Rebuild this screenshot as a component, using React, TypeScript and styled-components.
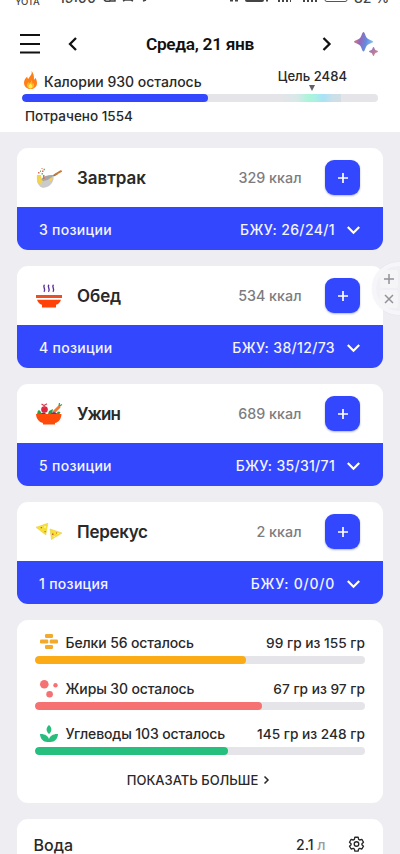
import React from 'react';
import styled, { createGlobalStyle } from 'styled-components';

const GlobalStyle = createGlobalStyle`
  * { box-sizing: border-box; }
  html, body { margin: 0; background: #eeedf2; }
  body { font-family: Inter, "Noto Sans", sans-serif; font-weight: 500; color: #292929; }
  button { font: inherit; color: inherit; border: 0; padding: 0; background: none; }
`;

const Screen = styled.div`
  position: relative;
  height: 854px;
  overflow: hidden;
  background: #eeedf2;
`;

const Icon = styled.svg<{ $w: number; $h: number }>`
  display: block;
  flex: none;
  width: ${(p) => p.$w}px;
  height: ${(p) => p.$h}px;
  overflow: visible;
`;

const Text = styled.span<{ $size?: number; $track?: number }>`
  font-size: ${(p) => p.$size ?? 14}px;
  letter-spacing: ${(p) => p.$track ?? 0}px;
  line-height: 18px;
  white-space: nowrap;
`;

const Header = styled.header`
  height: 132px;
  background: #fff;
`;

const StatusBar = styled.div`
  height: 23px;
  padding: 0 16px 0 15px;
  display: flex;
  justify-content: space-between;
  overflow: hidden;
  color: #444;
`;

const StatusGroup = styled.div`
  display: flex;
  align-items: flex-start;
`;

const Carrier = styled.span`
  width: 44px;
  margin-top: -5px;
  font-size: 9.5px;
  line-height: 13px;
  letter-spacing: -0.2px;
`;

const StatusText = styled.span<{ $width: number }>`
  width: ${(p) => p.$width}px;
  margin-top: -11.500px;
  font-size: 14px;
  line-height: 18px;
  white-space: nowrap;
`;

const NavBar = styled.nav`
  height: 42px;
  padding: 0 22px 0 20px;
  display: grid;
  grid-template-columns: 48px 11px 1fr 11px 22px 24px;
  align-items: center;
`;

const DateTitle = styled.h1`
  margin: 0;
  padding-left: 0;
  text-align: center;
  font: 600 17.3px/24px Roboto, sans-serif;
  letter-spacing: -0.3px;
  color: #111;
`;

const Budget = styled.section`
  padding: 0 22px;
`;

const BudgetTop = styled.div`
  height: 28.5px;
  display: flex;
  justify-content: space-between;
`;

const Remaining = styled.div`
  display: flex;
  align-items: flex-start;
  gap: 7px;
  padding: 6px 0 0 2px;

  span { margin-top: 2px; }
`;

const Goal = styled.div`
  display: flex;
  flex-direction: column;
  align-items: center;
  padding: 2px 31px 0 0;
`;

const Track = styled.div<{ $gradient?: boolean }>`
  height: 8px;
  border-radius: 4px;
  overflow: hidden;
  background: ${(p) =>
    p.$gradient
      ? 'linear-gradient(90deg, #e4e4e9 260px, #d8e8e8 275px, #a9f5da 287px, #aaf0e4 293px, #a8e2f7 301px, #cbdfe9 311px, #d2dee6 319px) 0 0 / 319px 100% no-repeat, #e4e4e9'
      : '#e4e4e9'};
`;

const Fill = styled.div<{ $color: string; $percent: number }>`
  width: ${(p) => p.$percent}%;
  height: 100%;
  border-radius: 4px;
  background: ${(p) => p.$color};
`;

const Spent = styled.div`
  display: flex;
  padding: 5px 3px 0;
`;

const Content = styled.main`
  display: flex;
  flex-direction: column;
  gap: 16px;
  padding: 16.400px 17.500px 0 17px;
`;

const Card = styled.section`
  flex: none;
  height: 102px;
  border-radius: 11px;
  overflow: hidden;
  background: #fff;
`;

const MealTop = styled.div`
  height: 58.5px;
  padding: 0 22.500px 0 18.500px;
  display: grid;
  grid-template-columns: 41.5px 1fr auto 58.5px;
  align-items: center;
`;

const MealName = styled.h2<{ $track: number }>`
  margin: 0;
  font-size: 17px;
  font-weight: 600;
  line-height: 22px;
  letter-spacing: ${(p) => p.$track}px;
`;

const Kcal = styled(Text)`
  color: #7c7c7f;
`;

const AddButton = styled.button`
  width: 35px;
  height: 35px;
  margin-left: auto;
  border-radius: 9px;
  display: grid;
  place-items: center;
  background: #3347ff;
  box-shadow: 0 1px 2px rgba(30, 40, 100, 0.35);
`;

const MealBottom = styled.div`
  height: 43.5px;
  padding: 3px 22.500px 0 22px;
  display: flex;
  align-items: center;
  color: #f4f5ff;
  background: #3347ff;
`;

const Macros = styled(Text)`
  margin: 0 12px 0 auto;
`;

const MacroCard = styled(Card)`
  height: 183px;
  padding: 14px 17.500px 0 18px;
`;

const MacroRow = styled.div`
  height: 45.5px;
`;

const MacroHead = styled.div`
  height: 22px;
  padding-left: 5px;
  display: grid;
  grid-template-columns: 25.5px 1fr auto;
  align-items: start;
`;

const ShowMore = styled.button`
  margin: 0 auto;
  display: flex;
  align-items: center;
  gap: 6px;
  transform: translateX(-2px);
`;

const WaterCard = styled(Card)`
  padding: 17px 18px 0 16.5px;
  display: grid;
  grid-template-columns: 1fr auto 23px 16px;
  align-items: start;
`;

const Unit = styled.span`
  color: #9b9ba0;
`;

const Bubble = styled.aside`
  position: absolute;
  left: 371.5px;
  top: 262px;
  width: 53px;
  height: 53px;
  border-radius: 50%;
  border: 4px solid rgba(248, 248, 251, 0.8);
  background: rgba(240, 240, 245, 0.85);
  box-shadow: 0 0 1px rgba(0, 0, 0, 0.12);
  display: flex;
  flex-direction: column;
  justify-content: center;
  gap: 2px;
  padding-left: 4.5px;
`;

const BubbleKey = styled.span`
  width: 18px;
  height: 18px;
  border-radius: 3px;
  display: grid;
  place-items: center;
  background: rgba(247, 247, 250, 0.7);
`;

function Chevron({ dir }: { dir: 'left' | 'right' }) {
  return (
    <Icon $w={11} $h={14} viewBox="0 0 11 14" fill="none" stroke="#111" strokeWidth="2.3">
      <path d={dir === 'left' ? 'M8 1 2 7l6 6' : 'M2.500 1l6 6-6 6'} />
    </Icon>
  );
}

function Sparkles() {
  return (
    <Icon $w={24} $h={24} viewBox="0 0 24 24">
      <defs>
        <linearGradient id="sparkle" x1="0" y1="0" x2="1" y2="0.25">
          <stop offset="0" stopColor="#f28165" />
          <stop offset="0.4" stopColor="#9269bd" />
          <stop offset="0.7" stopColor="#6689da" />
          <stop offset="1" stopColor="#7bbcf0" />
        </linearGradient>
        <linearGradient id="sparkle-small" x1="0" y1="0" x2="1" y2="1">
          <stop offset="0" stopColor="#7c73cc" />
          <stop offset="1" stopColor="#ef8179" />
        </linearGradient>
      </defs>
      <path fill="url(#sparkle)" d="M9.500 0C10.800 0 11.300 4 13 6C15 8 19 8.600 19 9.800S15 11.600 13 13.500C11.300 15.500 10.800 19.500 9.500 19.500S7.700 15.500 6 13.500C4 11.600 0 11 0 9.800S4 8 6 6C7.700 4 8.200 0 9.500 0z" />
      <path fill="url(#sparkle-small)" d="M19.500 15c.7 0 1 2 1.700 2.700s2.800 1 2.800 1.800-2.100 1.100-2.800 1.800-1 2.700-1.700 2.700-1-2-1.700-2.700-2.800-1-2.800-1.800 2.100-1.100 2.800-1.800 1-2.700 1.700-2.700z" />
    </Icon>
  );
}

function Flame() {
  return (
    <Icon $w={13} $h={18} viewBox="0 0 13 18">
      <path fill="#ff7f17" d="M7.500 0c.8 2.600-.4 4.100-2 5.900-.6.700-.9 1.300-1.200 2C3.500 7.300 3.200 6.500 3.300 5.400 1.500 7 0 9 0 11.700 0 15.300 2.700 18 6.500 18s6.500-2.600 6.500-6.100c0-2-.8-3.700-1.700-5.100-.2 1-.7 1.600-1.400 2C10.300 5.500 9.600 2 7.500 0z" />
      <path fill="#ffb326" d="M7.100 9c.3 1.500-.5 2.300-1.500 3.200-.5-.4-.7-.7-.8-1.300-1.300 1.200-2 2.100-2 3.600 0 2 1.500 3 3.700 3s3.700-1.200 3.700-3c0-1.200-.4-2-1-2.700-.2.500-.5.900-1 1.100C8.500 11.500 8.300 10 7.100 9z" />
      <path fill="#fff04d" d="M6.500 12.500c-.9 1-1.900 1.700-1.900 3 0 1.200.8 1.900 1.900 1.900s1.900-.7 1.900-1.900c0-1.300-1-2-1.900-3z" />
    </Icon>
  );
}

function Wok() {
  return (
    <Icon $w={26} $h={22} viewBox="0 0 26 22">
      <path fill="#cacaca" d="M1 14C4 12 14 11 17.500 8.500c1 6-3.500 11.800-9.500 12.300-3.500.2-6-2.800-7-6.800z" />
      <path fill="#a6a6a7" d="M5 12C8 9 14 7.500 17.500 8.300c-1.500 3-7 5.500-11.500 6z" />
      <path d="m17.300 8.700 4-2" stroke="#777" strokeWidth="1.600" />
      <path d="m19.200 7.500 5.800-3.300" stroke="#c97a32" strokeWidth="2" strokeLinecap="round" />
      <path d="M2 8v4.500c0 2 1 3.500 4 4M4 8l.5 7 2-1.500M13.500 13.500l2.500-2.500" stroke="#f1d34e" strokeWidth="2.200" fill="none" />
      <path fill="#e56a54" d="M2 5h1.500v1.500H2zM6 3.500h1.500V5H6zM7 8h1.500v4H7zM5.500 1h1v1h-1z" />
      <path fill="#62b96b" d="M4 3.500h1V5H4zM7.500 1.800H9v1.500H7.500zM5.500 6H7v1.400H5.500z" />
    </Icon>
  );
}

function SoupBowl() {
  return (
    <Icon $w={26} $h={24} viewBox="0 0 26 24">
      <path d="M8.500.8C6 3 10.500 5 8 7.900M13 .8C10.500 3 15 5 12.500 7.900M17.500.8C15 3 19.500 5 17 7.900" fill="none" stroke="#583096" strokeWidth="1.400" />
      <path fill="#e85127" d="M0 11h26v3H0z" />
      <path fill="#ff4208" d="M1 15.800h24c-1 3-3 4.500-5 5v2.700H6v-2.700c-2-.5-4-2-5-5z" />
    </Icon>
  );
}

function SaladBowl() {
  return (
    <Icon $w={26} $h={22} viewBox="0 0 26 22">
      <path d="m18 9 5-5" stroke="#f07938" strokeWidth="3" strokeLinecap="round" />
      <path d="M23 3l.5-3M23.500 3l2.500-1.500" stroke="#35a852" strokeWidth="1.300" />
      <circle cx="8.500" cy="6.500" r="3.300" fill="#dc2642" />
      <path d="M5.500 1 8 2.500 11 .7M8.400 2v3" fill="none" stroke="#db4150" strokeWidth="1.200" />
      <path fill="#2b9c48" d="M1 11c1-2 0-3 2-4 2 1 2 3 3 4zM12 11l1-3 4-2-1 5zM20 11l2-2.500 2.500.5-1 2z" />
      <path fill="#61338e" d="M5 11c1-2 4-2 5 0zM15 11c1-2.500 5-2.500 6 0z" />
      <path fill="#ff4b0a" d="M0 11h25.500c-.3 5-3 8.500-6.500 9v1.500H7V20c-4-1-6.700-4-7-9z" />
      <path d="M1 12.500h23.500" stroke="#d75a2a" />
    </Icon>
  );
}

function Chips() {
  return (
    <Icon $w={26} $h={17} viewBox="0 0 26 17">
      <path fill="#f7df38" stroke="#e8d04a" strokeWidth=".6" d="M0 4.300 11.800.300 9.800 12zM14 6l12 4-10.500 6.500z" />
      <path fill="#c96330" d="M4.700 4h1.300v1.300H4.700zM8.500 8h1.200v1.200H8.500zM16 10.500h1.500V12H16zM20 9.500h1v1h-1z" />
      <path fill="#fff38d" d="M8 3h2v2H8zM17.500 13h1.500v1h-1.500zM21.500 10h1.500v1h-1.500z" />
    </Icon>
  );
}

function Blocks() {
  return (
    <Icon $w={18} $h={15} viewBox="0 0 18 15" fill="#f1aa2c">
      <rect x="5" width="8" height="4" rx="1.300" />
      <rect y="5.500" width="8.300" height="4" rx="1.300" />
      <rect x="9.700" y="5.500" width="8.300" height="4" rx="1.300" />
      <rect x="5" y="11" width="8" height="4" rx="1.300" />
    </Icon>
  );
}

function Drops() {
  return (
    <Icon $w={18} $h={18} viewBox="0 0 18 18" fill="#f47273">
      <circle cx="4.300" cy="4.300" r="4.300" />
      <circle cx="15.500" cy="5.200" r="2.200" />
      <circle cx="9.600" cy="14.200" r="3.300" />
    </Icon>
  );
}

function Leaves() {
  return (
    <Icon $w={18} $h={17} viewBox="0 0 18 17" fill="#27bd7d">
      <path d="M9 0c3.200 2.800 3.200 6.300 0 9-3.200-2.700-3.200-6.200 0-9z" />
      <path d="M0 9c5-.3 8 2 9 5 1-3 4-5.300 9-5-.2 4.800-3.300 8-7.500 8h-3C3.300 17 .2 13.800 0 9z" />
    </Icon>
  );
}

function Gear() {
  return (
    <Icon $w={15} $h={16} viewBox="1.500 1 21 22" fill="none" stroke="#292929" strokeWidth="1.900" strokeLinejoin="round">
      <path d="m9.700 2.500h4.600l.7 3 1.500.9 3-.9 2.300 4-2.200 2v1.500l2.200 2-2.300 4-3-.9-1.500.9-.7 3H9.700L9 19l-1.500-.9-3 .9-2.300-4 2.200-2v-1.500l-2.200-2 2.300-4 3 .9L9 5.500z" />
      <circle cx="12" cy="12" r="3.200" />
    </Icon>
  );
}

const meals = [
  { name: 'Завтрак', track: -0.05, icon: <Wok />, kcal: '329 ккал', items: '3 позиции', macros: '26/24/1', macroTrack: 0.38 },
  { name: 'Обед', track: -0.1, icon: <SoupBowl />, kcal: '534 ккал', items: '4 позиции', macros: '38/12/73', macroTrack: 0.35 },
  { name: 'Ужин', track: -0.9, icon: <SaladBowl />, kcal: '689 ккал', items: '5 позиции', macros: '35/31/71', macroTrack: 0.3 },
  { name: 'Перекус', track: -0.3, icon: <Chips />, kcal: '2 ккал', items: '1 позиция', macros: '0/0/0', macroTrack: 0.75 },
];

const macros = [
  { name: 'Белки 56 осталось', amount: '99 гр из 155 гр', color: '#faab16', percent: 64, icon: <Blocks /> },
  { name: 'Жиры 30 осталось', amount: '67 гр из 97 гр', color: '#f57172', percent: 68.7, icon: <Drops /> },
  { name: 'Углеводы 103 осталось', amount: '145 гр из 248 гр', color: '#27bf7e', percent: 58.5, icon: <Leaves /> },
];

export default function App() {
  return (
    <Screen>
      <GlobalStyle />
      <Header>
        <StatusBar>
          <StatusGroup>
            <Carrier>YOTA</Carrier>
            <StatusText $width={43}>19:00</StatusText>
            <Icon $w={50} $h={5} viewBox="0 0 50 5" fill="none" stroke="#444" strokeWidth="1.500">
              <path d="M2 0l2 1.200h4M8 0v1h5V0M21 1l2-1h6l2 1M41 1l3-1" />
            </Icon>
          </StatusGroup>
          <StatusGroup>
            <Icon $w={125} $h={7} viewBox="0 0 125 7" fill="#444">
              <path d="M1 0h3v1.500H1zM6 0h3v1.500H6zM37 0h2v1.500h-2z" />
              <path d="M16 0h19q0 2-2 2H18q-2 0-2-2z" />
              <path d="M49 0h2v2h-2zM53 0h2v2h-2zM57 0h2v2h-2zM61 0h1v2h-1zM74 0h2v2h-2zM78 0h2v2h-2zM82 0h2v2h-2zM86 0h2v2h-2z" />
              <path d="M96 0q0 1.500 2 1.500h18q2 0 2-1.500" fill="none" stroke="#555" />
            </Icon>
            <StatusText $width={30}>82 %</StatusText>
          </StatusGroup>
        </StatusBar>
        <NavBar>
          <Icon $w={20} $h={20} viewBox="0 0 20 20" stroke="#111" strokeWidth="2">
            <path d="M0 1h20M0 10h20M0 18.600h20" />
          </Icon>
          <Chevron dir="left" />
          <DateTitle>Среда, 21 янв</DateTitle>
          <Chevron dir="right" />
          <span />
          <Sparkles />
        </NavBar>
        <Budget>
          <BudgetTop>
            <Remaining>
              <Flame />
              <Text>Калории 930 осталось</Text>
            </Remaining>
            <Goal>
              <Text $size={13.1}>Цель 2484</Text>
              <Icon $w={6} $h={6} viewBox="0 0 6 6" fill="#626266">
                <path d="M0 0h6L3 6z" />
              </Icon>
            </Goal>
          </BudgetTop>
          <Track $gradient>
            <Fill $color="#3347ff" $percent={52.2} />
          </Track>
          <Spent>
            <Text $size={13.5}>Потрачено 1554</Text>
          </Spent>
        </Budget>
      </Header>

      <Content>
        {meals.map((m) => (
          <Card key={m.name}>
            <MealTop>
              {m.icon}
              <MealName $track={m.track}>{m.name}</MealName>
              <Kcal $size={14.3}>{m.kcal}</Kcal>
              <AddButton aria-label="Добавить">
                <Icon $w={10} $h={10} viewBox="0 0 10 10" stroke="#fff" strokeWidth="1.700">
                  <path d="M5 0v10M0 5h10" />
                </Icon>
              </AddButton>
            </MealTop>
            <MealBottom>
              <Text $track={0.3}>{m.items}</Text>
              <Macros $track={m.macroTrack}>БЖУ: {m.macros}</Macros>
              <Icon $w={13} $h={8} viewBox="0 0 13 8" fill="none" stroke="#fff" strokeWidth="2.200">
                <path d="m.8 1 5.700 5.700L12.200 1" />
              </Icon>
            </MealBottom>
          </Card>
        ))}

        <MacroCard>
          {macros.map((m) => (
            <MacroRow key={m.name}>
              <MacroHead>
                {m.icon}
                <Text $track={-0.12}>{m.name}</Text>
                <Text $size={13.7}>{m.amount}</Text>
              </MacroHead>
              <Track>
                <Fill $color={m.color} $percent={m.percent} />
              </Track>
            </MacroRow>
          ))}
          <ShowMore>
            <Text $size={13}>ПОКАЗАТЬ БОЛЬШЕ</Text>
            <Icon $w={5} $h={8} viewBox="0 0 5 8" fill="none" stroke="#292929" strokeWidth="1.500">
              <path d="m.5.5 3.500 3.500L.5 7.500" />
            </Icon>
          </ShowMore>
        </MacroCard>

        <WaterCard>
          <Text $size={16}>Вода</Text>
          <Text>
            2.1 <Unit>л</Unit>
          </Text>
          <span />
          <Gear />
        </WaterCard>
      </Content>

      <Bubble>
        <BubbleKey>
          <Icon $w={10} $h={10} viewBox="0 0 10 10" stroke="#929297" strokeWidth="1.500">
            <path d="M5 0v10M0 5h10" />
          </Icon>
        </BubbleKey>
        <BubbleKey>
          <Icon $w={8} $h={8} viewBox="0 0 8 8" stroke="#929297" strokeWidth="1.500">
            <path d="m0 0 8 8M8 0 0 8" />
          </Icon>
        </BubbleKey>
      </Bubble>
    </Screen>
  );
}
